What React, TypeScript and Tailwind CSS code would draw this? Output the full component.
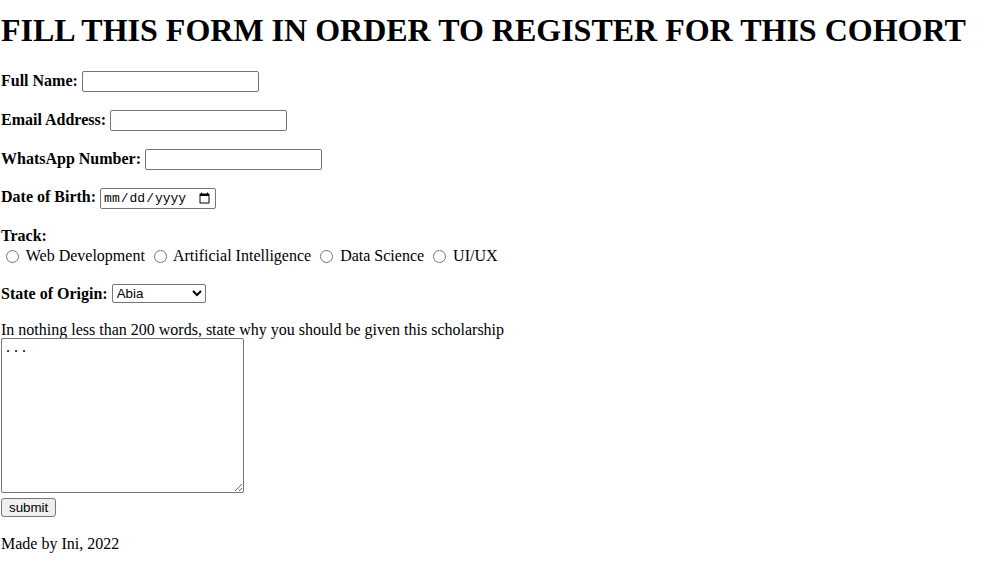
import React from "react";

const inputCls =
  "align-baseline my-[1px] w-[177px] h-[21px] border border-[#767676] rounded-[2px] bg-white px-[2px] py-[1px] text-[13.33px] font-['Liberation_Sans',Arial,sans-serif]";

const radioCls = "ml-[5px] mr-[3px] mt-[5px] mb-[4px] w-[13px] h-[13px] align-[-2px]";

export default function App() {
  return (
    <div className="font-['Liberation_Serif','Times_New_Roman',serif] text-[16px] leading-[normal] text-black bg-white min-h-[571px]">
      <div className="pt-[12px]">
        <h1 className="text-[32px] font-bold leading-[normal] pl-[1px]">
          FILL THIS FORM IN ORDER TO REGISTER FOR THIS COHORT
        </h1>
        <form className="pl-[1px]" onSubmit={(e) => e.preventDefault()}>
          <p className="mt-[21px]">
            <label className="font-bold">Full Name:</label>{" "}
            <input type="text" className={inputCls} />
          </p>
          <p className="mt-[16px]">
            <label className="font-bold">Email Address:</label>{" "}
            <input type="email" className={inputCls} />
          </p>
          <p className="mt-[16px]">
            <label className="font-bold">WhatsApp Number:</label>{" "}
            <input type="tel" className={inputCls} />
          </p>
          <p className="mt-[16px]">
            <label className="font-bold">Date of Birth:</label>{" "}
            <input
              type="date"
              className="align-baseline my-[1px] w-[116px] h-[21px] border border-[#767676] rounded-[2px] bg-white px-[2px] py-[1px] text-[13px] font-['Liberation_Mono',monospace]"
            />
          </p>
          <p className="mt-[17px]">
            <label className="font-bold">Track:</label>
            <br />
            <input type="radio" name="track" className={radioCls} />{" "}
            <label>Web Development</label>{" "}
            <input type="radio" name="track" className={radioCls} />{" "}
            <label>Artificial Intelligence</label>{" "}
            <input type="radio" name="track" className={radioCls} />{" "}
            <label>Data Science</label>{" "}
            <input type="radio" name="track" className={radioCls} />{" "}
            <label>UI/UX</label>
          </p>
          <p className="mt-[16px]">
            <label className="font-bold">State of Origin:</label>{" "}
            <select
              defaultValue="Abia"
              className="align-[1px] mt-[1px] mb-[2px] w-[94px] h-[19px] border border-[#767676] rounded-[2px] bg-white text-[13.33px] font-['Liberation_Sans',Arial,sans-serif]"
            >
              <option>Abia</option>
              <option>Adamawa</option>
              <option>Akwa Ibom</option>
              <option>Anambra</option>
              <option>Bauchi</option>
            </select>
          </p>
          <p className="mt-[16px]">
            In nothing less than 200 words, state why you should be given this scholarship
            <br />
            <textarea
              defaultValue="..."
              className="align-baseline -mt-[1px] w-[243px] h-[155px] border border-[#767676] rounded-[2px] bg-white p-[2px] text-[13.33px] font-['Liberation_Mono',monospace] resize"
            />
            <br />
            <button
              type="submit"
              className="h-[19px] mt-[1px] mb-[2px] bg-[#efefef] border border-[#767676] rounded-[3px] px-[7px] py-0 text-[13.33px] font-['Liberation_Sans',Arial,sans-serif] leading-[normal]"
            >
              submit
            </button>
          </p>
        </form>
        <p className="mt-[16px] pl-[1px]">Made by Ini, 2022</p>
      </div>
    </div>
  );
}
